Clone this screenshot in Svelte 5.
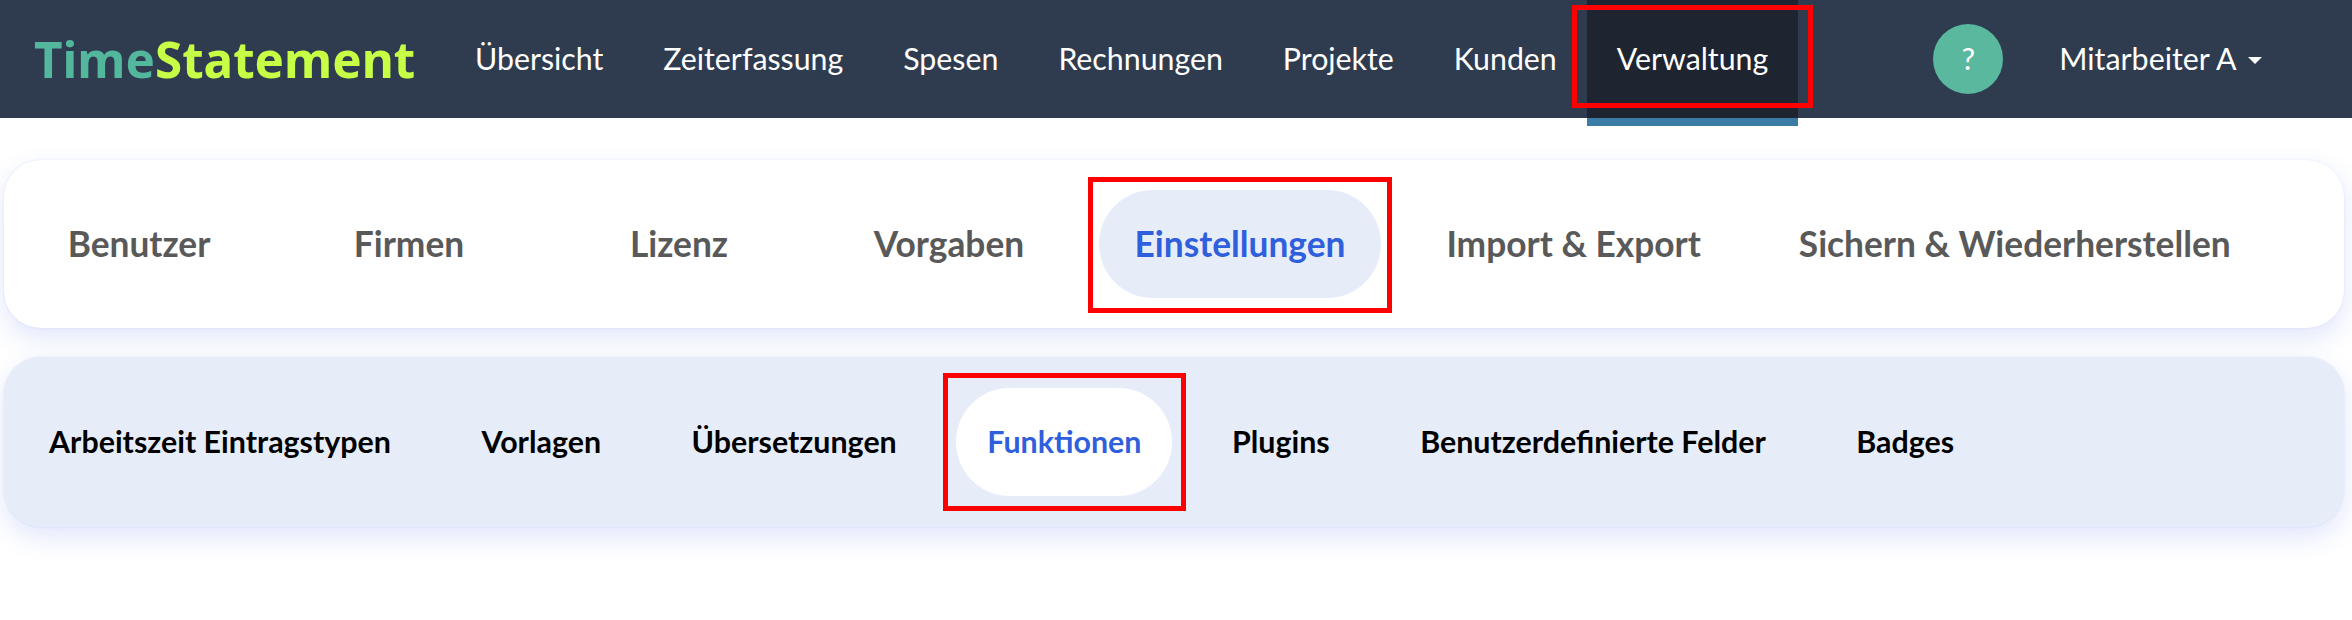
<script>
  const nav = ['Übersicht', 'Zeiterfassung', 'Spesen', 'Rechnungen', 'Projekte', 'Kunden'];
  const primary = ['Benutzer', 'Firmen', 'Lizenz', 'Vorgaben', 'Einstellungen', 'Import & Export', 'Sichern & Wiederherstellen'];
  const secondary = ['Arbeitszeit Eintragstypen', 'Vorlagen', 'Übersetzungen', 'Funktionen', 'Plugins', 'Benutzerdefinierte Felder', 'Badges'];
</script>

<header class="topbar">
  <a class="logo" href="#top"><span class="time">Time</span><span class="statement">Statement</span></a>
  <nav class="mainnav">
    {#each nav as item}
      <a class="navlink" href="#top">{item}</a>
    {/each}
    <a class="navlink current" href="#top">Verwaltung<span class="mark mark-nav"></span></a>
  </nav>
  <div class="account">
    <button class="help">?</button>
    <button class="user">Mitarbeiter A<span class="caret"></span></button>
  </div>
</header>

<main class="content">
  <div class="tabs primary">
    {#each primary as item}
      <a class="tab" class:active={item === 'Einstellungen'} class:fixed={primary.indexOf(item) < 4} href="#top">
        {item}
        {#if item === 'Einstellungen'}<span class="mark mark-primary"></span>{/if}
      </a>
    {/each}
  </div>
  <div class="tabs secondary">
    {#each secondary as item}
      <a class="tab" class:active={item === 'Funktionen'} href="#top">
        {item}
        {#if item === 'Funktionen'}<span class="mark mark-secondary"></span>{/if}
      </a>
    {/each}
  </div>
</main>

<style>
  :global(body) {
    margin: 0;
    background: #fff;
    font-family: Lato, "Liberation Sans", sans-serif;
  }
  a { text-decoration: none; }
  .topbar {
    display: flex;
    align-items: center;
    height: 118px;
    background: #2f3c4f;
    padding-left: 34px;
    color: #fff;
  }
  .logo {
    width: 381px;
    font-family: "Noto Sans", sans-serif;
    font-weight: 700;
    font-size: 49.4px;
    line-height: 116px;
    white-space: nowrap;
  }
  .time { color: #52b79c; }
  .statement { color: #c6ff45; }
  .mainnav {
    display: flex;
    align-items: stretch;
    height: 118px;
    margin-left: 30px;
  }
  .navlink {
    position: relative;
    display: flex;
    align-items: center;
    padding: 0 30px 3px;
    font-size: 30.3px;
    color: #fff;
    white-space: nowrap;
  }
  .current {
    background: #1e2530;
    box-shadow: 0 8px 0 #3a7ca5;
  }
  .account {
    display: flex;
    align-items: center;
    margin-left: 135px;
  }
  .help {
    width: 70px;
    height: 70px;
    padding: 0 0 2px;
    border: 0;
    border-radius: 50%;
    background: #59b89d;
    color: #fff;
    font: 400 30.4px Lato, sans-serif;
  }
  .user {
    display: flex;
    align-items: center;
    margin-left: 56px;
    padding: 0 0 3px;
    border: 0;
    background: none;
    color: #fff;
    font: 400 30.4px Lato, sans-serif;
    white-space: nowrap;
  }
  .caret {
    margin-left: 11px;
    margin-top: 6px;
    border-top: 7.5px solid #fff;
    border-left: 7.5px solid transparent;
    border-right: 7.5px solid transparent;
  }
  .content {
    display: flex;
    flex-direction: column;
    gap: 29px;
    box-sizing: border-box;
    min-height: 502px;
    padding: 42px 8px 0 4px;
  }
  .tabs {
    display: flex;
    align-items: center;
    border-radius: 37px;
    box-shadow: 0 10px 26px rgba(70, 100, 230, 0.16), 0 0 2px rgba(70, 100, 230, 0.16);
  }
  .primary {
    height: 168px;
    gap: 30px;
    padding-left: 15px;
    background: #fff;
  }
  .secondary {
    height: 170px;
    gap: 28.5px;
    padding-left: 14px;
    background: #e7edf8;
  }
  .tab {
    position: relative;
    display: flex;
    align-items: center;
    justify-content: center;
    box-sizing: border-box;
    height: 108px;
    border-radius: 54px;
    white-space: nowrap;
    font-weight: 700;
  }
  .primary .tab {
    padding: 0 35.5px 2px;
    font-size: 35.3px;
    color: #595959;
  }
  .primary .fixed {
    width: 240px;
    padding: 0 0 2px;
  }
  .primary .tab:last-child {
    margin-left: -3px;
  }
  .secondary .tab {
    padding: 0 31px 3px;
    font-size: 30.4px;
    color: #000;
  }
  .primary .active {
    background: #e7edf8;
    color: #2f5fdc;
  }
  .secondary .active {
    background: #fff;
    color: #2f5fdc;
  }
  .mark {
    position: absolute;
    border: 5px solid #f00;
    pointer-events: none;
  }
  .mark-nav { left: -15px; right: -15px; top: 5px; bottom: 10px; }
  .mark-primary { left: -11px; right: -11px; top: -13px; bottom: -15px; }
  .mark-secondary { left: -13px; right: -14px; top: -15px; bottom: -15px; }
</style>
